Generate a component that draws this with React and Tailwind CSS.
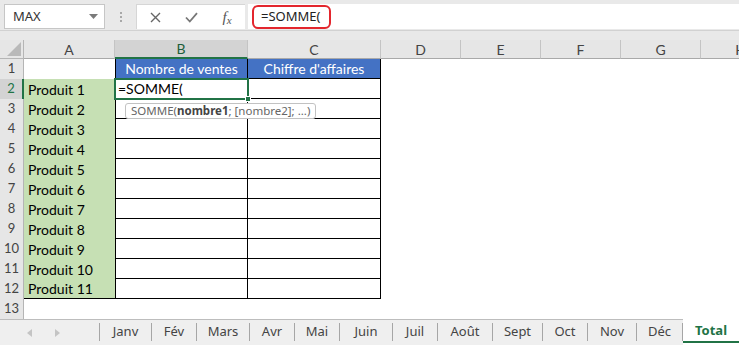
import React from "react";

const EXTRA_COLS = ["D", "E", "F", "G", "H"];

const tabs = [
  { label: "Janv", w: "w-[52px]" },
  { label: "Fév", w: "w-[45px]" },
  { label: "Mars", w: "w-[53px]" },
  { label: "Avr", w: "w-[45px]" },
  { label: "Mai", w: "w-[45px]" },
  { label: "Juin", w: "w-[53px]" },
  { label: "Juil", w: "w-[45px]" },
  { label: "Août", w: "w-[55px]" },
  { label: "Sept", w: "w-[50px]" },
  { label: "Oct", w: "w-[45px]" },
  { label: "Nov", w: "w-[49px]" },
  { label: "Déc", w: "w-[46px]" },
];

const rows = Array.from({ length: 13 }, (_, i) => i + 1);

function Toolbar() {
  return (
    <div className="h-[40px] shrink-0 bg-[#e9e9e9] font-['Noto_Sans',sans-serif]">
      <div className="h-[31px] flex items-start pt-[4px] pl-[4px] border-b border-[#d2d2d2]">
        {/* name box */}
        <div className="w-[101px] h-[25px] bg-white border border-[#c6c6c6] flex items-center justify-between pl-[8px] pr-[6px]">
          <span className="text-[13px] text-[#333]">MAX</span>
          <svg width="9" height="5" viewBox="0 0 9 5">
            <path d="M0 0 L9 0 L4.5 5 Z" fill="#7a7a7a" />
          </svg>
        </div>
        <div className="w-[31px] h-[25px] flex flex-col items-center justify-center gap-[2px]">
          <span className="w-[2px] h-[2px] bg-[#a8a8a8]" />
          <span className="w-[2px] h-[2px] bg-[#a8a8a8]" />
          <span className="w-[2px] h-[2px] bg-[#a8a8a8]" />
        </div>
        {/* cancel / enter / fx */}
        <div className="w-[109px] h-[25px] bg-white border-l border-t border-[#d6d6d6] flex">
          <div className="w-[36px] h-full flex items-center justify-center">
            <svg width="11" height="11" viewBox="0 0 11 11">
              <path d="M1 1 L10 10 M10 1 L1 10" stroke="#666" strokeWidth="1.4" />
            </svg>
          </div>
          <div className="w-[36px] h-full flex items-center justify-center">
            <svg width="13" height="11" viewBox="0 0 13 11">
              <path d="M1 5.5 L4.8 9.5 L12 1.2" stroke="#777" strokeWidth="1.8" fill="none" />
            </svg>
          </div>
          <div className="w-[36px] h-full flex items-center justify-center">
            <span className="font-['Liberation_Serif',serif] italic text-[15px] text-[#555] leading-none">
              f<span className="text-[11px] relative top-[2px]">x</span>
            </span>
          </div>
        </div>
        <div className="w-[3px]" />
        {/* formula bar */}
        <div className="flex-1 h-[25px] bg-white flex items-center pl-[4px]">
          <div className="w-[79px] h-[24px] border-2 border-[#e3262d] rounded-[6px] flex items-center pl-[7px]">
            <span className="text-[13px] text-[#222]">=SOMME(</span>
          </div>
        </div>
      </div>
    </div>
  );
}

function HeaderRow() {
  return (
    <div className="h-[19px] shrink-0 flex bg-[#e6e6e6] text-[14px] text-[#444]">
      <div className="w-[24px] shrink-0 border-r border-b border-[#b5b5b5] flex items-end justify-end p-[2px]">
        <svg width="14" height="14" viewBox="0 0 14 14">
          <path d="M14 0 L14 14 L0 14 Z" fill="#b9b9b9" />
        </svg>
      </div>
      <div className="w-[91px] shrink-0 border-r border-b border-[#c4c4c4] border-b-[#a9a9a9] flex items-center justify-center">A</div>
      <div className="w-[133px] shrink-0 bg-[#d3d3d3] border-r border-[#c4c4c4] border-b-2 border-b-[#217346] flex items-center justify-center text-[#1d5e3a]">B</div>
      <div className="w-[133px] shrink-0 border-r border-b border-[#c4c4c4] border-b-[#a9a9a9] flex items-center justify-center">C</div>
      {EXTRA_COLS.map((c) => (
        <div key={c} className="w-[80px] shrink-0 border-r border-b border-[#c4c4c4] border-b-[#a9a9a9] flex items-center justify-center">
          {c}
        </div>
      ))}
    </div>
  );
}

function Row({ n }) {
  const selected = n === 2;
  const product = n >= 2 && n <= 12;
  const table = n <= 12;
  return (
    <div className="h-[20px] shrink-0 flex">
      <div
        className={
          selected
            ? "w-[24px] shrink-0 bg-[#d3d3d3] border-r-2 border-[#217346] flex items-center justify-center text-[13px] text-[#217346]"
            : "w-[24px] shrink-0 bg-[#e6e6e6] border-r border-[#b5b5b5] flex items-center justify-center text-[13px] text-[#444]"
        }
      >
        {n}
      </div>
      <div
        className={
          "w-[91px] shrink-0 flex items-center pl-[4px] text-[14px] text-black " +
          (product ? "bg-[#c6e0b4] " : "bg-white ") +
          (n === 12 ? "border-b border-black" : "")
        }
      >
        {product ? `Produit ${n - 1}` : ""}
      </div>
      {table ? (
        <>
          <div
            className={
              "w-[133px] shrink-0 border-l border-r border-b border-black flex items-center text-[14px] " +
              (n === 1 ? "bg-[#4472c4] text-white justify-center" : "bg-white text-black pl-[2px]")
            }
          >
            {n === 1 ? "Nombre de ventes" : selected ? "=SOMME(" : ""}
          </div>
          <div
            className={
              "w-[133px] shrink-0 border-r border-b border-black flex items-center justify-center text-[14px] " +
              (n === 1 ? "bg-[#4472c4] text-white" : "bg-white")
            }
          >
            {n === 1 ? "Chiffre d'affaires" : ""}
          </div>
        </>
      ) : (
        <>
          <div className="w-[133px] shrink-0" />
          <div className="w-[133px] shrink-0" />
        </>
      )}
      {EXTRA_COLS.map((c) => (
        <div key={c} className="w-[80px] shrink-0 bg-white" />
      ))}
    </div>
  );
}

function SheetTabs() {
  return (
    <div className="h-[26px] shrink-0 flex bg-[#efefef] font-['Noto_Sans',sans-serif] text-[13px] text-[#444]">
      <div className="w-[683px] shrink-0 flex border-t border-[#bdbdbd]">
        <div className="w-[100px] shrink-0 flex items-center">
          <svg className="ml-[27px]" width="5" height="8" viewBox="0 0 5 8">
            <path d="M5 0 L5 8 L0 4 Z" fill="#c4c4c4" />
          </svg>
          <svg className="ml-[23px]" width="5" height="8" viewBox="0 0 5 8">
            <path d="M0 0 L0 8 L5 4 Z" fill="#c4c4c4" />
          </svg>
          <span className="ml-auto w-px h-[18px] bg-[#a6a6a6] mb-[2px]" />
        </div>
        {tabs.map((t) => (
          <div key={t.label} className={t.w + " shrink-0 flex items-center"}>
            <span className="flex-1 text-center pb-[2px]">{t.label}</span>
            <span className="w-px h-[18px] bg-[#a6a6a6] mb-[2px]" />
          </div>
        ))}
      </div>
      <div className="flex-1 bg-white flex flex-col">
        <span className="flex-1 flex items-center justify-center font-bold text-[#217346] pt-[2px]">Total</span>
        <span className="h-[2px] bg-[#217346] mb-[2px]" />
      </div>
    </div>
  );
}

export default function App() {
  return (
    <div className="relative w-[739px] h-[345px] overflow-hidden bg-white flex flex-col font-['Lato',sans-serif]">
      <Toolbar />
      <HeaderRow />
      {rows.map((n) => (
        <Row key={n} n={n} />
      ))}
      <SheetTabs />

      {/* active cell B2 */}
      <div className="absolute left-[114px] top-[78px] w-[135px] h-[22px] border-2 border-[#217346] pointer-events-none" />
      <div className="absolute left-[245px] top-[96px] w-[6px] h-[6px] bg-[#217346] border border-white" />

      {/* function tooltip */}
      <div className="absolute left-[125px] top-[103px] h-[16px] px-[5px] bg-white border border-[#c2c2c2] rounded-[3px] flex items-center font-['Noto_Sans',sans-serif] text-[11.5px] leading-none text-[#666]">
        SOMME(<span className="font-bold text-[#444]">nombre1</span>; [nombre2]; ...)
      </div>
    </div>
  );
}
